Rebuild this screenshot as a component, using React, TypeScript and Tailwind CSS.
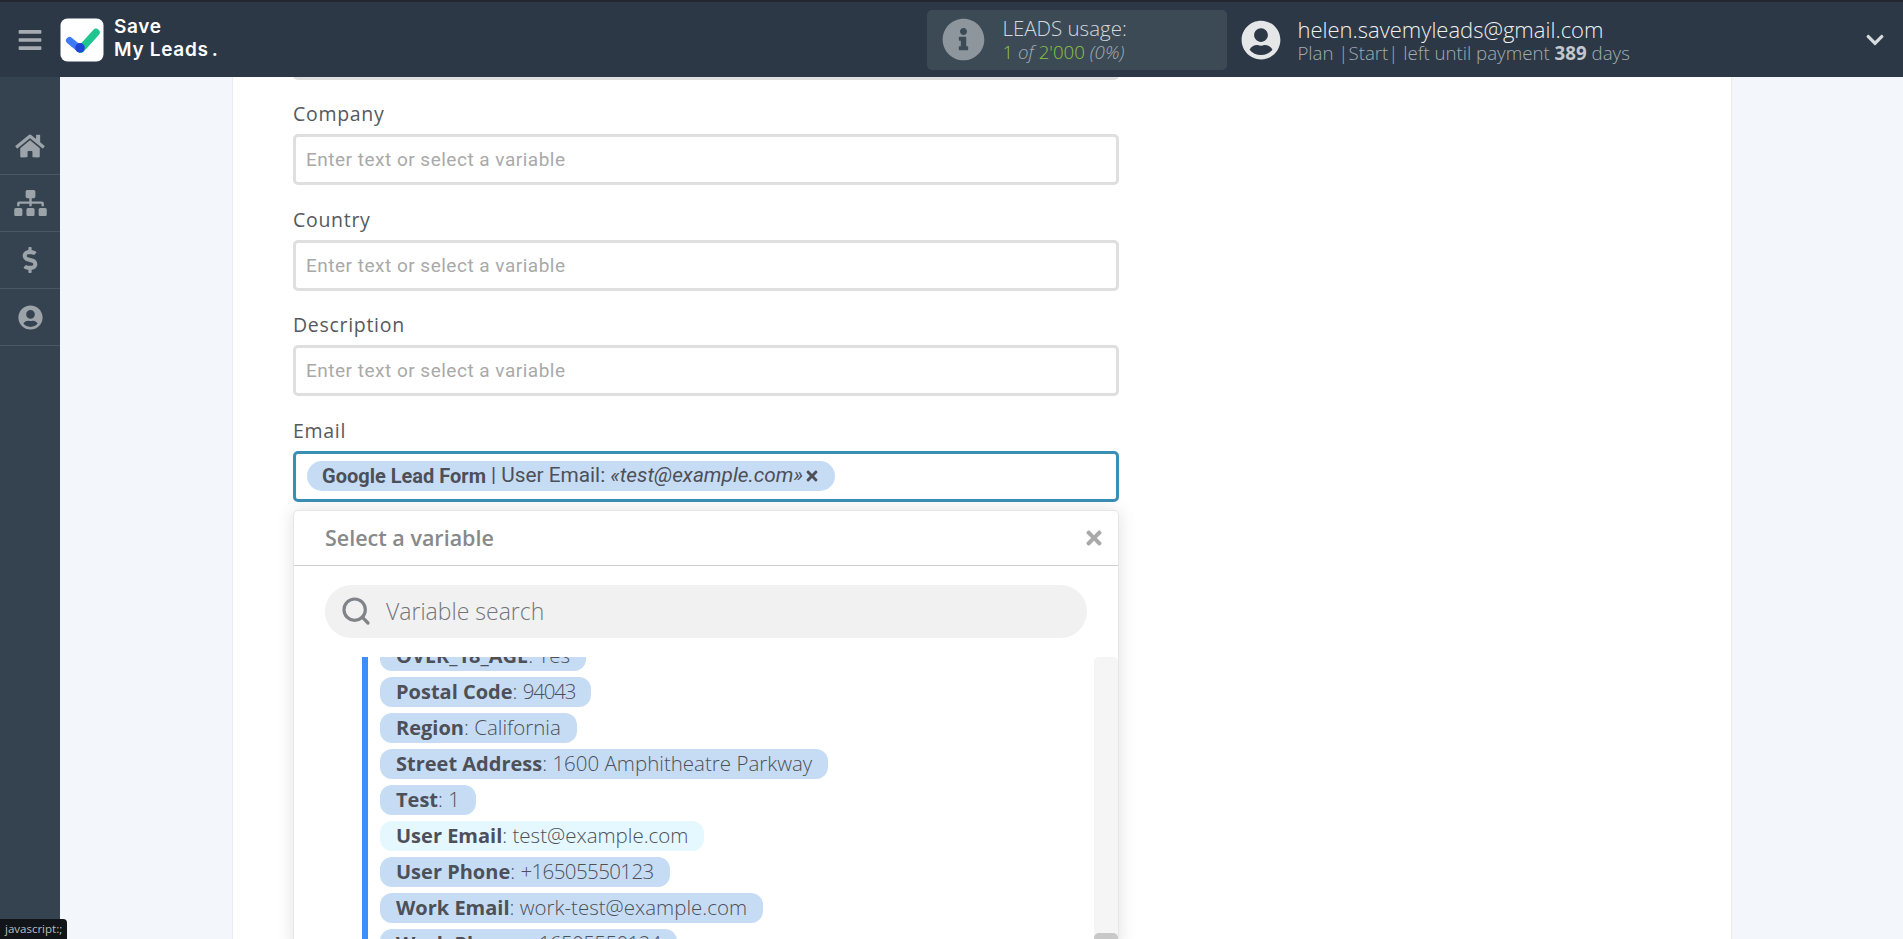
import React from "react";
import { FaBars, FaHome, FaSitemap, FaDollarSign, FaUserCircle, FaInfoCircle, FaChevronDown, FaTimes } from "react-icons/fa";
import { Search } from "lucide-react";

const open = "font-['Open_Sans',sans-serif]";

function Field({ label }: { label: string }) {
  return (
    <div className="mb-[22.5px]">
      <div className={`${open} text-[19.5px] leading-[24px] tracking-[0.7px] text-[#55595e] mb-[8px]`}>{label}</div>
      <div className="w-[826px] h-[51px] rounded-[5px] border-[3px] border-[#dfdfdf] bg-white flex items-center pl-[10px] pt-[2px] font-['Roboto',sans-serif] text-[19px] tracking-[0.5px] text-[#a9a9a9]">
        Enter text or select a variable
      </div>
    </div>
  );
}

const vars: [string, string, string, boolean?][] = [
  ["OVER_18_AGE", "Yes", ""],
  ["Postal Code", "94043", "tracking-[-1.2px]"],
  ["Region", "California", ""],
  ["Street Address", "1600 Amphitheatre Parkway", ""],
  ["Test", "1", ""],
  ["User Email", "test@example.com", "", true],
  ["User Phone", "+16505550123", "tracking-[-0.6px]"],
  ["Work Email", "work-test@example.com", ""],
  ["Work Phone", "+16505550124", "tracking-[-0.6px]"],
];

function Logo() {
  return (
    <svg viewBox="0 0 44 44" className="w-[44px] h-[44px] shrink-0">
      <rect x="0.5" y="0.5" width="43" height="43" rx="7" fill="#fff" />
      <path d="M9.5 22.5 L20 31" stroke="#3d7bf6" strokeWidth="7" strokeLinecap="round" />
      <path d="M21 31 L36 14.5" stroke="#1fc58e" strokeWidth="7.5" strokeLinecap="round" />
      <circle cx="20" cy="29.8" r="4.8" fill="#1f45d6" />
    </svg>
  );
}

export default function App() {
  return (
    <div className={`relative h-[939px] w-[1903px] overflow-hidden flex flex-col bg-[#f3f7fc] ${open}`}>
      <header className="h-[77px] shrink-0 bg-[#2c3846] border-t-2 border-[#23262e] flex items-center">
        <div className="w-[60px] flex justify-center">
          <FaBars className="text-[#a5abb1] w-[24px] h-[26px]" />
        </div>
        <Logo />
        <div className="ml-[10px] -mt-[3px] font-['Inter',sans-serif] font-semibold text-[19px] leading-[23px] tracking-[0.7px] text-white">
          <div>Save</div>
          <div>My Leads<span className="ml-[3px]">.</span></div>
        </div>
        <div className="ml-[709px] w-[300px] h-[60px] rounded-[5px] bg-[#3c4a55] flex items-center pl-[15px]">
          <FaInfoCircle className="text-[#8e969d] w-[43px] h-[43px]" />
          <div className="ml-[17px] leading-[24px] text-[#d5d9dc] font-light">
            <div className="text-[20.5px]">LEADS usage:</div>
            <div className="text-[18.7px] text-[#a3acb3] italic">
              <span className="not-italic text-[#8cc63f]">1</span> of <span className="not-italic text-[#8cc63f]">2'000</span> (0%)
            </div>
          </div>
        </div>
        <FaUserCircle className="ml-[14px] text-[#e4e6e8] w-[40px] h-[40px]" />
        <div className="ml-[16px] font-light">
          <div className="text-[22px] leading-[26px] text-[#eef0f2]">helen.savemyleads@gmail.com</div>
          <div className="text-[18.7px] leading-[22px] text-[#a3acb3]">
            Plan |Start| left until payment <b className="font-bold text-[#c2c8cc]">389</b> days
          </div>
        </div>
        <FaChevronDown className="ml-auto mr-[18px] text-[#d8dbde] w-[20px] h-[20px]" />
      </header>

      <div className="flex flex-1 min-h-0">
        <aside className="w-[60px] shrink-0 bg-[#354250] pt-[41px]">
          {[
            <FaHome className="w-[30px] h-[26px]" />,
            <FaSitemap className="w-[33px] h-[26px]" />,
            <FaDollarSign className="w-[16px] h-[26px]" />,
            <FaUserCircle className="w-[25px] h-[25px]" />,
          ].map((ic, i) => (
            <div key={i} className="h-[57px] border-b border-[#4a5663] flex items-center justify-center text-[#9ca3a9]">
              {ic}
            </div>
          ))}
        </aside>

        <main className="flex-1 min-w-0 overflow-hidden pl-[172px]">
          <section className="w-[1500px] h-full bg-white border-x border-[#e8ebef] pl-[60px] overflow-hidden">
            <div className="-mt-[2px] w-[826px] h-[5px] rounded-b-[5px] border-b-[3px] border-x-[3px] border-[#dfdfdf] mb-[22px]"></div>
            <Field label="Company" />
            <Field label="Country" />
            <Field label="Description" />
            <div>
              <div className={`text-[19.5px] leading-[24px] tracking-[0.7px] text-[#55595e] mb-[8px]`}>Email</div>
              <div className="w-[826px] h-[51px] rounded-[5px] border-[3px] border-[#3a8fb7] bg-white flex items-center pl-[11px]">
                <div className="h-[30px] rounded-[15px] bg-[#c6dcf5] px-[15px] flex items-center text-[#4d5058] font-['Roboto',sans-serif] text-[20.8px] whitespace-nowrap">
                  <b className="font-bold text-[20px]">Google Lead Form</b>
                  <span className="ml-[5px]">| User Email:</span>
                  <i className="ml-[5px]">«test@example.com»</i>
                  <FaTimes className="ml-[1px] w-[16px] h-[16px]" />
                </div>
              </div>
              <div className="mt-[8px] w-[826px] h-[440px] rounded-t-[5px] border border-[#e6e6e6] bg-white shadow-[0_0_18px_rgba(0,0,0,0.12)]">
                <div className="h-[55px] border-b border-[#cfcfcf] flex items-center justify-between pl-[31px] pr-[15px]">
                  <span className="text-[21.5px] font-semibold text-[#87898b] pt-[1px]">Select a variable</span>
                  <FaTimes className="text-[#a9a9a9] w-[18px] h-[22px]" />
                </div>
                <div className="ml-[31px] mt-[19px] w-[762px] h-[53px] rounded-full bg-[#f1f1f1] flex items-center pl-[15px]">
                  <Search className="text-[#808488] w-[32px] h-[32px]" strokeWidth={2.4} />
                  <span className="ml-[14px] text-[23px] text-[#72767a] font-light">Variable search</span>
                </div>
                <div className="mt-[19px] h-[310px] flex overflow-hidden">
                  <div className="ml-[68px] w-[6px] shrink-0 bg-[#3f8cff]"></div>
                  <div className="flex-1 -mt-[16px] pl-[12px] flex flex-col items-start gap-[6px]">
                    {vars.map(([k, v, tr, hl]) => (
                      <div key={k} className={`h-[30px] shrink-0 rounded-[12px] px-[16px] flex items-center text-[20px] text-[#4d5058] whitespace-nowrap ${hl ? "bg-[#e5f8ff]" : "bg-[#c6dcf5]"}`}>
                        <b className="font-bold">{k}</b>
                        <span className="font-light text-[20.5px]">: <span className={tr}>{v}</span></span>
                      </div>
                    ))}
                  </div>
                  <div className="relative w-[24px] shrink-0 bg-[#f5f5f5] rounded-t-[5px]">
                    <div className="absolute top-[276px] left-0 right-0 h-[40px] rounded-[5px] bg-[#c8c8c8]"></div>
                  </div>
                </div>
              </div>
            </div>
          </section>
        </main>
      </div>

      <div className={`absolute left-0 bottom-0 h-[20px] w-[67px] rounded-tr-[4px] bg-[#111418] text-[#b9bcbf] text-[11.5px] leading-[20px] pl-[5px] ${open}`}>
        javascript:;
      </div>
    </div>
  );
}
